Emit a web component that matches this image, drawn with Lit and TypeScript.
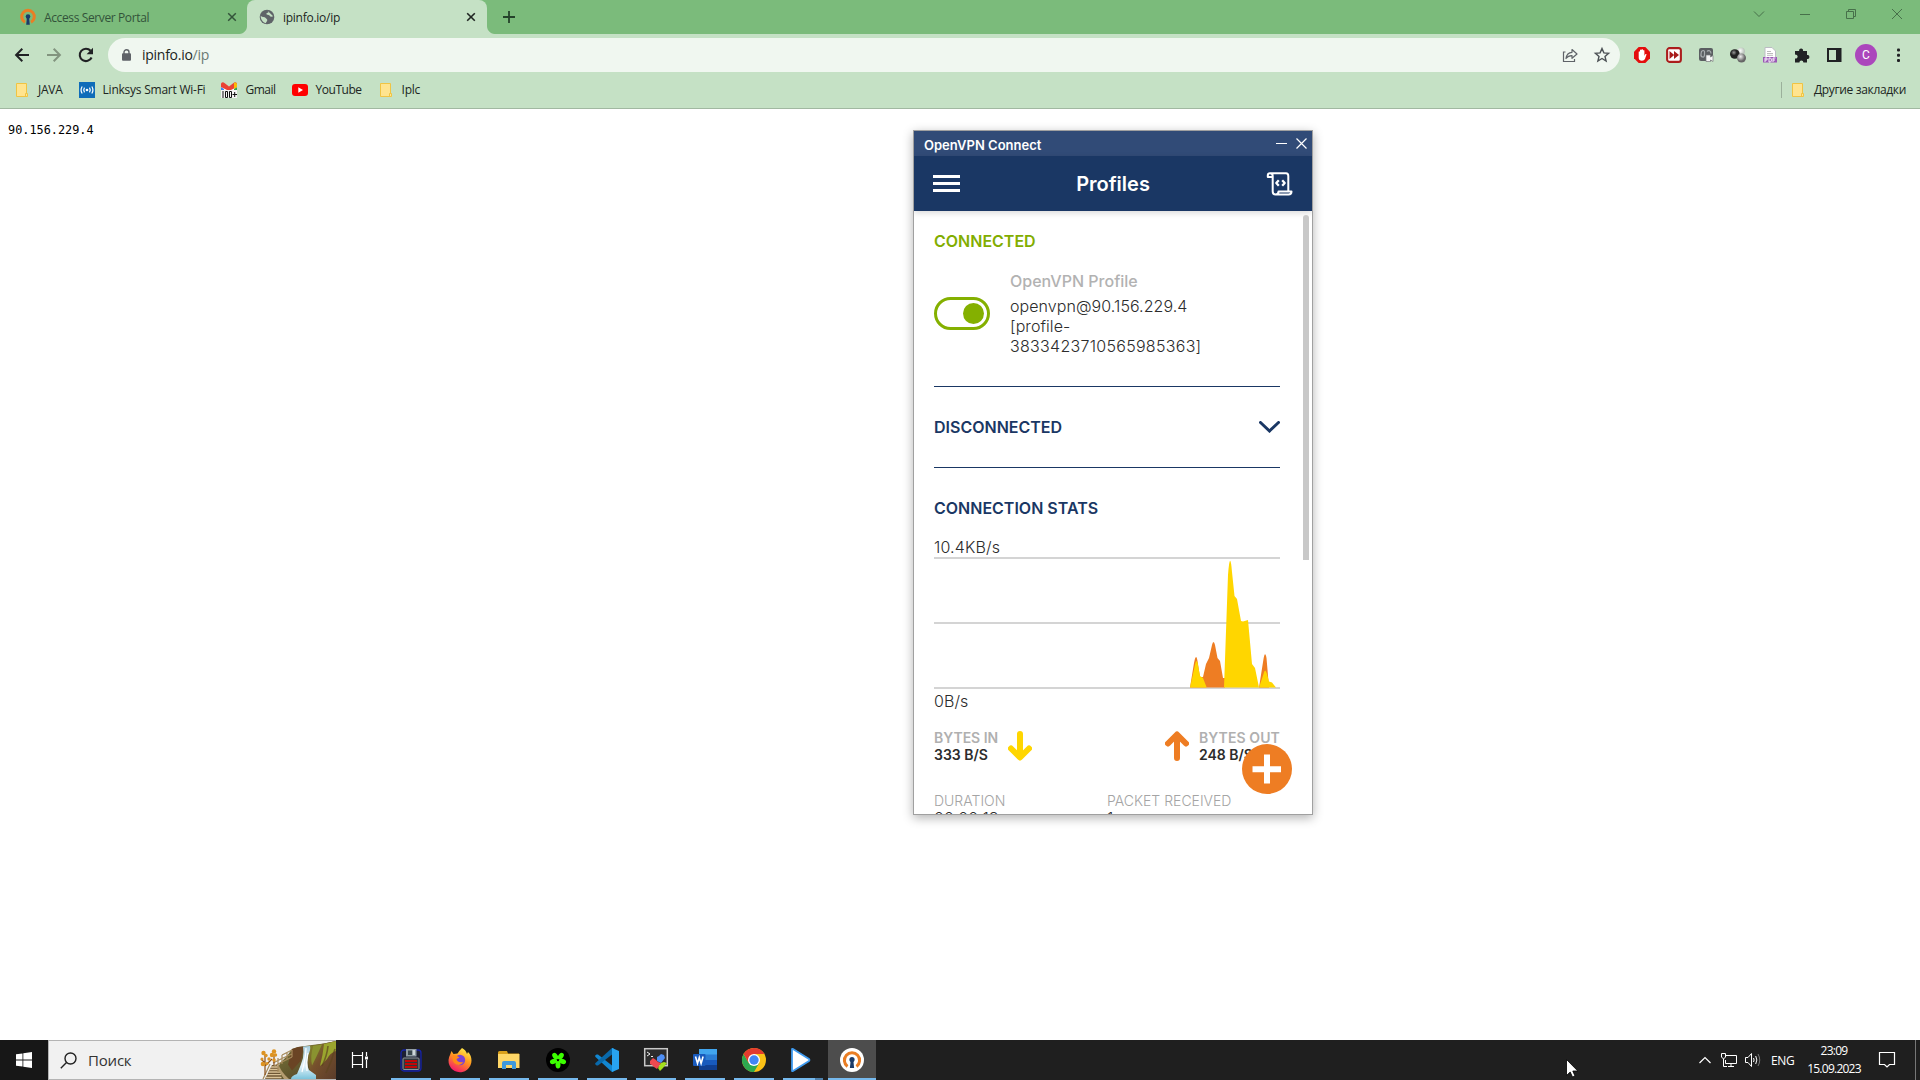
import { LitElement, html, css, svg } from "lit";
import { customElement } from "lit/decorators.js";

const folder = html`<svg class="i16" viewBox="0 0 16 16"><path d="M2.500 1.500h10v10h1v3h-11z" fill="#ffe48f" stroke="#f0c443"/><path d="M11.500 14.500v-3h1.500" fill="none" stroke="#f0c443"/></svg>`;

const vpnMark = (ring: string, key: string) => svg`
  <path d="M5 13.200A6.300 6.300 0 1 1 11 13.200" fill="none" stroke=${ring} stroke-width="3"/>
  <circle cx="8" cy="7.600" r="2.300" fill=${key}/><path d="M6.900 8.500h2.200l.7 7.300H6.200z" fill=${key}/>`;

@customElement("browser-chrome")
export class BrowserChrome extends LitElement {
  static styles = css`
    :host { display: flex; flex-direction: column; flex: none; height: 109px; box-sizing: border-box; background: #c5e1c5; border-bottom: 1px solid #a1b8a1; font-family: "Open Sans", sans-serif; font-size: 12px; color: #202522; white-space: nowrap; }
    svg { display: block; flex: none; overflow: visible; }
    .i16 { width: 16px; height: 16px; }
    .strip { display: flex; height: 34px; background: #7bbb7b; }
    .tab { display: flex; align-items: center; box-sizing: border-box; height: 34px; width: 240px; }
    .tab .label { flex: 1; margin-left: 8px; }
    .idle { width: 247px; padding: 0 7px 0 20px; color: #33533a; }
    .idle .label { letter-spacing: -0.38px; }
    .live { position: relative; padding: 0 8px 0 12px; background: #c5e1c5; border-radius: 8px 8px 0 0; }
    .live .label { letter-spacing: -0.26px; }
    .live::before, .live::after { content: ""; position: absolute; bottom: 0; width: 8px; height: 8px; }
    .live::before { left: -8px; background: radial-gradient(circle at 0 0, #7bbb7b 7.5px, #c5e1c5 8.5px); }
    .live::after { right: -8px; background: radial-gradient(circle at 100% 0, #7bbb7b 7.5px, #c5e1c5 8.5px); }
    .plus { margin: 10px 0 0 15px; width: 14px; height: 14px; }
    .win { display: flex; margin: 8px 17px 0 auto; gap: 34px; }
    .win svg { width: 12px; height: 12px; }
    .bar { display: flex; align-items: center; height: 42px; padding-left: 14px; box-sizing: border-box; }
    .nav { display: flex; gap: 16px; }
    .url { display: flex; align-items: center; box-sizing: border-box; width: 1512px; height: 34px; margin-left: 14px; padding: 0 10px 0 14px; border-radius: 17px; background: #f0f7f0; font-size: 14px; }
    .addr { flex: 1; margin: -1px 0 0 11px; letter-spacing: -0.27px; }
    .addr span { color: #6a7a74; }
    .urlicons { display: flex; gap: 16px; }
    .ext { display: flex; align-items: center; gap: 16px; margin-left: 14px; }
    .avatar { width: 22px; height: 22px; margin: 0 -3px; border-radius: 50%; background: #ab47bc; color: #fff; font: 12px/22px Roboto, sans-serif; text-align: center; }
    .marks { display: flex; align-items: center; height: 28px; padding: 0 14px; }
    .marks span { margin-top: -1px; }
    .mark { display: flex; align-items: center; gap: 8px; margin-right: 16px; letter-spacing: -0.24px; }
    .mark.wide { letter-spacing: -0.48px; }
    .other { display: flex; align-items: center; gap: 8px; margin-left: auto; letter-spacing: -0.34px; }
    .sep { width: 1px; height: 16px; background: #9bb09b; }
  `;
  render() {
    return html`
      <div class="strip">
        <div class="tab idle">
          <svg class="i16" viewBox="0 0 16 16">${vpnMark("#ea7e24", "#1b3b68")}</svg>
          <span class="label">Access Server Portal</span>
          <svg width="16" height="16" viewBox="0 0 16 16"><path d="M4.200 4.200l7.600 7.600M11.800 4.200l-7.600 7.600" stroke="#33533a" stroke-width="1.500"/></svg>
        </div>
        <div class="tab live">
          <svg class="i16" viewBox="0 0 16 16"><circle cx="8" cy="8" r="7.300" fill="#5f6368"/><path d="M8.500 1.700c1.800.6 1.500 1.600.3 2s-2 1-1 1.700 2.500.3 2.900 1.400 2 1.200 3.500.500M1.700 6.800c1.500 1.700 4 1 5 2.200S9 10.500 8 12s-1 2-1.300 2.300C4 13.500 1.500 10.500 1.700 6.800z" fill="#c5e1c5"/></svg>
          <span class="label">ipinfo.io/ip</span>
          <svg width="16" height="16" viewBox="0 0 16 16"><path d="M4.200 4.200l7.600 7.600M11.800 4.200l-7.600 7.600" stroke="#202522" stroke-width="1.600"/></svg>
        </div>
        <svg class="plus" viewBox="0 0 14 14"><path d="M7 1v12M1 7h12" stroke="#24422a" stroke-width="1.800"/></svg>
        <div class="win">
          <svg viewBox="0 0 12 12"><path d="M1 3.500l5 5 5-5" fill="none" stroke="#47704a"/></svg>
          <svg viewBox="0 0 12 12"><path d="M1 6.500h10" stroke="#47704a"/></svg>
          <svg viewBox="0 0 12 12"><path d="M1.500 3.500h7v7h-7zM3.500 3.500v-2h7v7h-2" fill="none" stroke="#47704a"/></svg>
          <svg viewBox="0 0 12 12"><path d="M1 1l10 10M11 1L1 11" stroke="#47704a"/></svg>
        </div>
      </div>
      <div class="bar">
        <div class="nav">
          <svg class="i16" viewBox="0 0 16 16"><path d="M15 8H2.500M8.300 1.800L2.100 8l6.200 6.200" fill="none" stroke="#202124" stroke-width="2"/></svg>
          <svg class="i16" viewBox="0 0 16 16"><path d="M1 8h12.500M7.700 1.800L13.900 8l-6.200 6.200" fill="none" stroke="#82947f" stroke-width="2"/></svg>
          <svg class="i16" viewBox="0 0 16 16"><path d="M13.600 10.500A6.200 6.200 0 1 1 12.600 3.800" fill="none" stroke="#202124" stroke-width="2.100"/><path d="M15 .8v6.400H8.600z" fill="#202124"/></svg>
        </div>
        <div class="url">
          <svg width="9" height="12" viewBox="0 0 9 12"><path d="M2 5V3.200a2.500 2.500 0 0 1 5 0V5" fill="none" stroke="#5f6368" stroke-width="1.400"/><rect y="4.300" width="9" height="7.500" rx="1" fill="#5f6368"/></svg>
          <div class="addr">ipinfo.io<span>/ip</span></div>
          <div class="urlicons">
            <svg class="i16" viewBox="0 0 16 16"><path d="M3.500 5H1.500v9.500h11V12" fill="none" stroke="#5f6368" stroke-width="1.200"/><path d="M4 11.500C4.500 8 6.500 5.500 10 5.300V2.500L15 7l-5 4.300V8.600C7.500 8.500 5.500 9.500 4 11.500z" fill="none" stroke="#5f6368" stroke-width="1.200" stroke-linejoin="round"/></svg>
            <svg class="i16" viewBox="0 0 16 16"><path d="M8 1.600l1.900 4.300 4.700.4-3.600 3.100 1.100 4.600L8 11.500 3.900 14 5 9.400 1.400 6.300l4.700-.4z" fill="none" stroke="#4c5155" stroke-width="1.400"/></svg>
          </div>
        </div>
        <div class="ext">
          <svg class="i16" viewBox="0 0 16 16"><path d="M4.700 0h6.600L16 4.700v6.600L11.300 16H4.700L0 11.300V4.700z" fill="#e40d0d"/><path d="M4.700 8.500V4.700q.7-.9 1.300 0V7V3q.8-.9 1.500 0v3.500V2.600q.8-.9 1.500 0v4V3.500q.8-.8 1.400 0V9l.8-1.700q.9-.8 1.400 0L11 12q-1 1.700-3 1.700-3.300 0-3.300-3z" fill="#fff"/></svg>
          <svg class="i16" viewBox="0 0 16 16"><rect x=".8" y=".8" width="14.400" height="14.400" rx="2.800" fill="#b32020" stroke="#a91b1b" stroke-width="1.400"/><rect x="2.200" y="2.200" width="11.600" height="11.600" rx="1" fill="#fff"/><path d="M3.500 4L8.200 8l-4.700 4zM8 4l5 4-5 4z" fill="#a91b1b"/></svg>
          <svg class="i16" viewBox="0 0 16 16"><rect x="1" y="1" width="14" height="13" rx="2" fill="#5a5e61"/><path d="M3.500 4.500q2-2 3 0v3q0 3-2 2.500T3 7zM9 4.500c1.500-2 4-.5 4 2" fill="none" stroke="#a7acae" stroke-width="1.200"/><path d="M8 8h4.500v2L15 8.500v6L12.500 13v1.500H8z" fill="#f5f5f5" stroke="#77797b" stroke-width=".7"/></svg>
          <svg class="i16" viewBox="0 0 16 16"><defs><radialGradient id="bk" cx=".4" cy=".35"><stop offset="0" stop-color="#999"/><stop offset=".6" stop-color="#222"/></radialGradient><radialGradient id="gr" cx=".4" cy=".35"><stop offset="0" stop-color="#eee"/><stop offset="1" stop-color="#666"/></radialGradient><radialGradient id="wh" cx=".4" cy=".4"><stop offset="0" stop-color="#fff"/><stop offset="1" stop-color="#bbc4bc"/></radialGradient></defs><circle cx="11" cy="4.500" r="4" fill="url(#wh)"/><circle cx="4.800" cy="7" r="4.800" fill="url(#bk)"/><circle cx="11.500" cy="11" r="4.500" fill="url(#gr)"/></svg>
          <svg class="i16" viewBox="0 0 16 16"><path d="M3 .5h7l3.500 3.500v10H3z" fill="#fff" stroke="#bcbcc4"/><path d="M5 4.500h4M5 6.500h6M5 8.300h6" stroke="#aaa" stroke-width=".8"/><rect x="1" y="10" width="14" height="5.500" fill="#9b59b6"/><path d="M3 15v-4h2v2H3M7 11h1.500l.8 1v2l-.8 1H7zM11 15v-4h2.500M11 13h2" fill="none" stroke="#fff" stroke-width=".9"/></svg>
          <svg class="i16" viewBox="0 0 16 16"><path d="M1 4h4.200a2 2 0 1 1 3.800 0H13v4a2 2 0 1 1 0 3.900V15.500H9.400a2 2 0 1 0-4 0H1v-4a2 2 0 1 0 0-3.800z" fill="#202124"/></svg>
          <svg class="i16" viewBox="0 0 16 16"><rect x="2" y="2" width="12.500" height="12" fill="none" stroke="#202124" stroke-width="2"/><path d="M10 1h5v14h-5z" fill="#202124"/></svg>
          <div class="avatar">C</div>
          <svg class="i16" viewBox="0 0 16 16"><g fill="#202124"><rect x="7" y="1.500" width="3" height="3" rx="1"/><rect x="7" y="6.700" width="3" height="3" rx="1"/><rect x="7" y="12" width="3" height="3" rx="1"/></g></svg>
        </div>
      </div>
      <div class="marks">
        <div class="mark">${folder}<span>JAVA</span></div>
        <div class="mark"><svg class="i16" viewBox="0 0 16 16"><rect width="16" height="16" fill="#0f6cb9"/><circle cx="8" cy="8" r="1.300" fill="#fff"/><path d="M5.500 5.700q-1.500 2.300 0 4.600M10.500 5.700q1.500 2.300 0 4.600M3.200 4.500q-2.300 3.500 0 7M12.800 4.500q2.300 3.500 0 7" fill="none" stroke="#fff" stroke-width="1.200"/></svg><span>Linksys Smart Wi-Fi</span></div>
        <div class="mark wide"><svg class="i16" viewBox="0 0 16 16"><path d="M0 1h3l5 4 5-4h3v15H0z" fill="#fff"/><path d="M0 5l3 2v4H0z" fill="#4285f4"/><path d="M16 5l-3 2v4h3z" fill="#34a853"/><path d="M0 1.500Q1.500-.5 3.500 1L8 4.500 12.500 1q2-1.500 3.500.5V5L8 9 0 5z" fill="#ea4335"/><path d="M13 .8q2-.8 3 1V5l-3 2z" fill="#fbbc04"/><rect y="8" width="16" height="8" fill="#f4f4f4"/><path d="M2 9v7M4.500 9.500h2v6h-2zM8.500 9.500h2v6h-2zM11.500 12.500h4.500M13.700 10v5" fill="none" stroke="#111"/></svg><span>Gmail</span></div>
        <div class="mark wide"><svg class="i16" viewBox="0 0 16 16"><rect y="2" width="16" height="12" rx="3" fill="#f00"/><path d="M6.300 5.300L11 8l-4.700 2.700z" fill="#fff"/></svg><span>YouTube</span></div>
        <div class="mark">${folder}<span>Iplc</span></div>
        <div class="other"><i class="sep"></i>${folder}<span>Другие закладки</span></div>
      </div>`;
  }
}

@customElement("vpn-window")
export class VpnWindow extends LitElement {
  static styles = css`
    :host { display: flex; flex-direction: column; box-sizing: border-box; width: 400px; height: 685px; border: 1px solid #a0a0a0; background: #fff; box-shadow: 0 3px 10px rgba(0,0,0,.3); font: 16px/20px Inter, sans-serif; color: #2c2c2c; overflow: hidden; white-space: nowrap; }
    svg { display: block; flex: none; }
    .title { display: flex; align-items: center; height: 25px; flex: none; padding: 0 4px 0 10px; background: #314b77; color: #fff; font-size: 13px; font-weight: 600; }
    .title .name { flex: 1; padding-top: 2px; }
    .head { display: flex; align-items: center; justify-content: space-between; flex: none; height: 55px; padding: 0 19px; background: #1a3764; color: #fff; font-size: 20px; font-weight: 600; box-shadow: 0 2px 6px rgba(0,0,0,.15); }
    .body { display: flex; flex: 1; min-height: 0; }
    .content { width: 346px; margin-left: 20px; display: flex; flex-direction: column; }
    .content > * { flex-shrink: 0; }
    .scroll { width: 6px; height: 345px; margin: 4px 3px 0 auto; border-radius: 3px 3px 0 0; background: #c8c8c8; }
    h2 { margin: 0; font-size: 16px; line-height: 20px; font-weight: 600; color: #1a3764; }
    h2.on { color: #82ad00; margin-top: 20px; }
    .profile { display: flex; align-items: center; height: 85px; margin: 20px 0 30px; gap: 20px; }
    .toggle { display: flex; justify-content: flex-end; align-items: center; box-sizing: border-box; width: 56px; height: 33px; border: 3px solid #84b000; border-radius: 17px; padding-right: 3px; }
    .toggle i { width: 21px; height: 21px; border-radius: 50%; background: #84b000; }
    .info { width: 200px; }
    .pname { font-weight: 500; color: #b2b2b2; margin-bottom: 5px; }
    .rule { height: 1px; background: #1a3764; }
    .row { display: flex; align-items: center; justify-content: space-between; height: 80px; }
    .stats { padding: 30px 0 19px; }
    .lbl { font-weight: 300; letter-spacing: 0.07px; }
    .digits { letter-spacing: 0.29px; }
    .max { letter-spacing: 0.15px; }
    .zero { margin-top: 2px; }
    .bytes { display: flex; justify-content: space-between; margin-top: 18px; font-size: 14px; line-height: 17px; font-weight: 600; }
    .bytes > div { display: flex; align-items: center; gap: 10px; }
    .out { width: 81px; }
    .gray { color: #b0b0b0; }
    .bytes .out .gray { letter-spacing: 0.1px; }
    .grid { display: grid; grid-template-columns: 173px 173px; margin-top: 29px; font-size: 14px; line-height: 18px; font-weight: 300; }
    .grid .gray { color: #a4a4a4; }
    .val { font-size: 16px; line-height: 16px; color: #2c2c2c; }
    .fab { position: absolute; left: 328px; top: 613px; width: 50px; height: 50px; border-radius: 50%; background: #ee7d23; }
    .fab svg { width: 50px; height: 50px; }
  `;
  render() {
    return html`
      <div class="title"><span class="name">OpenVPN Connect</span>
        <svg width="32" height="11" viewBox="0 0 32 11"><path d="M0 5.500h11M20.500.5l10 10M30.500.5l-10 10" stroke="#fff" stroke-width="1.200" fill="none"/></svg></div>
      <div class="head">
        <svg width="27" height="17" viewBox="0 0 27 17"><path d="M0 1.500h27M0 8.500h27M0 15.500h27" stroke="#fff" stroke-width="2.800"/></svg>
        <span>Profiles</span>
        <svg width="27" height="24" viewBox="0 0 27 24"><g fill="none" stroke="#fff" stroke-width="2" stroke-linejoin="round"><path d="M6.500 5H1.800V3.500Q1.800 1.300 4 1.300H20Q22.300 1.300 22.300 4V18.500M4 1.300Q6.700 1.300 6.700 4V19.500Q6.700 22.500 9.500 22.500H22.500Q25.500 22.500 25.500 19.500H12.500Q12.500 22.500 9.500 22.500"/><path d="M12.800 8.300L10.300 11l2.500 2.700M16.200 8.300l2.500 2.700-2.500 2.700" stroke-width="2.300"/></g></svg>
      </div>
      <div class="body">
        <div class="content">
          <h2 class="on">CONNECTED</h2>
          <div class="profile">
            <div class="toggle"><i></i></div>
            <div class="info"><div class="pname">OpenVPN Profile</div><div class="lbl">openvpn@90.156.229.4<br>[profile-<br><span class="digits">3833423710565985363]</span></div></div>
          </div>
          <div class="rule"></div>
          <div class="row"><h2>DISCONNECTED</h2><svg width="21" height="12" viewBox="0 0 21 12"><path d="M1.500 1.500l9 8.500 9-8.500" fill="none" stroke="#1a3764" stroke-width="3" stroke-linecap="round"/></svg></div>
          <div class="rule"></div>
          <div class="stats"><h2>CONNECTION STATS</h2></div>
          <div class="lbl max">10.4KB/s</div>
          <svg width="346" height="132" viewBox="934 557 346 132">
            <path d="M934 558h346M934 623h346M934 688h346" stroke="#d4d4d4" stroke-width="2"/>
            <path d="M1190 687.500L1194 663Q1196 652 1197.500 661L1200 677H1203L1206 664 1209 658 1212 645Q1213.500 639 1215 645L1217.500 658 1220 661 1223 678H1225V687.500H1259L1263.500 659Q1265 650 1266.500 658L1269 687.500z" fill="#ee7d23"/>
            <path d="M1190 687.500L1194.500 667Q1196.500 656 1198 665L1200 676 1203 678 1206.700 687.500zM1224 687.500L1228 575Q1230 548 1232 572L1234.500 596 1237 599 1241 621 1243 621.500 1248 620 1252 664 1255 668 1259 687.500 1263.500 674Q1265 667 1267 674L1269 681.500 1272 682.500 1276 687.500z" fill="#ffd600"/>
          </svg>
          <div class="lbl zero">0B/s</div>
          <div class="bytes">
            <div><div><span class="gray">BYTES IN</span><br>333 B/S</div>
              <svg width="24" height="30" viewBox="0 0 24 30"><path d="M12 3v23M3 17.500l9 9 9-9" fill="none" stroke="#ffd600" stroke-width="6" stroke-linecap="round" stroke-linejoin="round"/></svg></div>
            <div><svg width="24" height="30" viewBox="0 0 24 30"><path d="M12 27V4M3 12.500l9-9 9 9" fill="none" stroke="#ee7d23" stroke-width="6" stroke-linecap="round" stroke-linejoin="round"/></svg>
              <div class="out"><span class="gray">BYTES OUT</span><br>248 B/S</div></div>
          </div>
          <div class="grid"><span class="gray">DURATION</span><span class="gray">PACKET RECEIVED</span><span class="val">00:00:18</span><span class="val">1 sec ago</span></div>
        </div>
        <div class="scroll"></div>
      </div>
      <div class="fab"><svg viewBox="0 0 50 50"><path d="M25 10.500v29M10.500 25.200h28.500" stroke="#fff" stroke-width="6"/></svg></div>`;
  }
}

@customElement("task-bar")
export class TaskBar extends LitElement {
  static styles = css`
    :host { display: flex; flex: none; height: 40px; background: #1f1f1f; font-family: "Open Sans", sans-serif; font-size: 12px; color: #fff; white-space: nowrap; }
    svg { display: block; flex: none; overflow: visible; }
    .start { display: flex; align-items: center; justify-content: center; width: 48px; background: #171717; }
    .search { display: flex; align-items: center; box-sizing: border-box; width: 288px; border: 1px solid #b4b4b4; border-right: 0; background: #f1f1f1; color: #333; font-size: 15px; padding-left: 11px; }
    .search .q { flex: 1; margin-left: 11px; letter-spacing: -0.2px; }
    .search .scene { overflow: hidden; }
    .task { display: flex; align-items: center; justify-content: center; width: 48px; }
    .apps { display: flex; gap: 9px; padding-left: 7px; }
    .app { display: flex; align-items: center; justify-content: center; width: 40px; box-sizing: border-box; border-bottom: 2px solid #76b9ed; padding-top: 1px; }
    .multi { border-image: linear-gradient(90deg, #76b9ed 31px, #4d80ab 31px) 2; border-width: 0 0 2px; border-style: solid; }
    .cur { width: 48px; margin-left: -4px; background: #4d4d4d; }
    .app svg { width: 24px; height: 24px; }
    .tray { display: flex; align-items: center; margin-left: auto; }
    .net { margin-left: 10px; }
    .vol { margin-left: 8px; }
    .lang { margin-left: 10px; width: 24px; letter-spacing: -0.4px; }
    .clock { width: 60px; margin-left: 9px; text-align: center; line-height: 18px; letter-spacing: -0.75px; }
    .note { margin-left: 15px; }
    .desk { width: 4px; height: 40px; margin-left: 20px; border-left: 1px solid #777; }
  `;
  render() {
    const apps = [
      svg`<rect x="2" y="2" width="20" height="21" rx="3" fill="#1d2033" stroke="#1522a8" stroke-width="1.300"/><path d="M7 1h10.500v7.500H7z" fill="#8f9ba2"/><path d="M9 2.500h4.500v4.500H9z" fill="#39464c"/><path d="M13.500 2h2.500v5h-2.500z" fill="#cdd5d9"/><rect x="4" y="10" width="16" height="11.500" rx="1" fill="#30373c" stroke="#8d9499"/><path d="M6 13h12M6 16h12M6 19h12" stroke="#c40606" stroke-width="2.200"/>`,
      svg`<defs><linearGradient id="ff" x1=".8" y1="0" x2=".3" y2="1"><stop offset="0" stop-color="#fff44f"/><stop offset=".45" stop-color="#ff9a1f"/><stop offset="1" stop-color="#f5156c"/></linearGradient></defs><path d="M14 0Q18 2 19 6l1-2q3.500 3.500 3.500 8.500A11.500 11.500 0 1 1 2 7l1.500-4 2 3 4-.5Q10.500 3.500 14 0z" fill="url(#ff)"/><circle cx="12" cy="12" r="5.200" fill="#7a42d4"/><path d="M5 7q4 0 6.500 2.500L8.500 11q1 4 7 3-2.500 4-7 2.500Q3 14 5 7z" fill="#ff8a16"/>`,
      svg`<path d="M1 4.500Q1 3 2.500 3H10l1 2.500h11V20H1z" fill="#dba11c"/><path d="M1 6h21.500v14H1z" fill="#ffd767"/><path d="M5 21v-6q0-2 2-2h10q2 0 2 2v6h-4v-4H9v4z" fill="#3f99dc"/>`,
      svg`<circle cx="12" cy="12" r="12" fill="#000"/>${[36, 108, 180, 252, 324].map(a => svg`<ellipse cx="12" cy="7.300" rx="2.500" ry="3.700" fill="#3cff00" transform="rotate(${a} 12 12)"/>`)}`,
      svg`<path d="M17 0l2 .8V23l-2 1L.5 9 0 7.800 1.500 6.500 3 6.500 17 17.500z" fill="#1286d0"/><path d="M17 0v6.500L3 17.500l-1.500 0L0 16l.5-1z" fill="#0969ab"/><path d="M17 0l7 3v18l-7 3z" fill="#28a3f0"/>`,
      svg`<rect x=".7" y=".7" width="22.600" height="17" fill="#2c2c2c" stroke="#c8c8c8" stroke-width="1.500"/><path d="M3 4l3 2-3 2M7 8.500h2" fill="none" stroke="#eee"/><path d="M13 9l2-1 2-2 3 1 1 3-4 5-4-2z" fill="#4f8ff5"/><path d="M6 13l3-3 3 2 2 2 3 1-4 6-3-2-2-2-2-1z" fill="#f04a50"/><path d="M14 20l3-5 3-1 3 1-4 5-3 3z" fill="#a4e01c"/>`,
      svg`<rect x="6" y="1" width="18" height="21" rx="1" fill="#2b7cd3"/><path d="M6 1h18v5.500H6z" fill="#41a5ee"/><path d="M6 12h18v5H6z" fill="#185abd"/><path d="M6 17h18v5H6z" fill="#103f91"/><rect y="6" width="12.500" height="12" rx="1" fill="#185abd"/><path d="M2.500 8.500l2 7 1.800-6 1.800 6 2-7" fill="none" stroke="#fff" stroke-width="1.600"/>`,
      svg`<circle cx="12" cy="12" r="12" fill="#fbc116"/><path d="M1.600 6A12 12 0 0 0 12 24l5.200-9L12 12 6.800 15z" fill="#2da94f"/><path d="M12 6h10.400A12 12 0 0 0 1.600 6l5.200 9z" fill="#e33b2e"/><circle cx="12" cy="12" r="6" fill="#fff"/><circle cx="12" cy="12" r="4.700" fill="#4285f4"/>`,
      svg`<path d="M1 1.500q0-1 1-.5l16 10q1 1 0 2L2 23q-1 .5-1-.5z" fill="#fff" stroke="#3f9bf0" stroke-width="1.800"/>`,
      svg`<circle cx="12" cy="12" r="12" fill="#fff"/><path d="M7.500 18.500A7.600 7.600 0 1 1 16.500 18.500" fill="none" stroke="#ea7e24" stroke-width="3"/><circle cx="12" cy="11.500" r="2.600" fill="#1b3b68"/><path d="M10.700 12h2.600l.8 8h-4.200z" fill="#1b3b68"/>`,
    ];
    return html`
      <div class="start"><svg width="16" height="16" viewBox="0 0 16 16"><path d="M0 2.300L6.500 1.400v6.200H0zM7.300 1.200L16 0v7.600H7.300zM0 8.400h6.500v6.200L0 13.700zM7.300 8.400H16V16l-8.700-1.200z" fill="#fff"/></svg></div>
      <div class="search">
        <svg width="17" height="17" viewBox="0 0 17 17"><circle cx="10.500" cy="6.500" r="5.500" fill="none" stroke="#222" stroke-width="1.400"/><path d="M6.500 10.500L.8 16.200" stroke="#222" stroke-width="1.400"/></svg>
        <span class="q">Поиск</span>
        <svg class="scene" width="76" height="38" viewBox="0 0 76 38">
          <defs>
            <linearGradient id="hill" x1="0" y1="0" x2="1" y2="1"><stop offset="0" stop-color="#84912c"/><stop offset=".45" stop-color="#76502c"/><stop offset="1" stop-color="#5a3c2a"/></linearGradient>
            <linearGradient id="bank" x1="0" y1="0" x2="1" y2="1"><stop offset="0" stop-color="#7c7a3a"/><stop offset="1" stop-color="#4c3a24"/></linearGradient>
            <linearGradient id="fall" x1="0" y1="0" x2="0" y2="1"><stop offset="0" stop-color="#a9cfdf"/><stop offset=".6" stop-color="#e6f4fa"/><stop offset="1" stop-color="#7cc4dc"/></linearGradient>
          </defs>
          <path d="M14 38L20 22 27 15 32 8 38 6 52 4 64 2.500 76 0V38z" fill="url(#bank)"/>
          <path d="M32 8l6-2 6-.5-3 14-9 10-4-6z" fill="#6a4424"/>
          <path d="M50 5l14-2.500L76 0v38H56l-6-8-2-10z" fill="url(#hill)"/>
          <path d="M53 5l9-1.500-6 13-4 8q-2-9 1-19z" fill="#8a9330"/>
          <path d="M64 3q5-1 12-3v10q-6 2-9 8-4 5-7 7 3-12 4-22z" fill="#9aa52e"/>
          <path d="M68 5q-1 10-6 20M75 8q-3 12-9 24" fill="none" stroke="#5c4420" stroke-width="1.600" opacity=".7"/>
          <path d="M43 5.500l7-.5q1 4-2 9-2 9 1 15l7 5v4H31q0-3 6-5 4-9 6-16 1-6 0-11.500z" fill="url(#fall)"/>
          <path d="M46 7q0 9-4 24M48 12q-2 9-1 18" stroke="#fff" stroke-width="1.200" fill="none"/>
          <path d="M5 38l7-14h5l4 14z" fill="#6e5635"/>
          <path d="M5.500 36.500h16M7 33.700h14M8.300 31h12M9.500 28.500h9M11 26h7" stroke="#d9c196" stroke-width="1.300"/>
          <path d="M18 22q2 8 11 16h-5l-6-9z" fill="#b49c70"/>
          <path d="M10 23L3 38M13 22l10-5 9-4M14 25l10-5 8-4M18 17v14M22 14v9M27 11v8M32 9v7M22 14l10-5" stroke="#a4895a" stroke-width="1.200" fill="none"/>
          <path d="M5 34V14M5 25l7-7M5 22l-4-4M14 24V14" stroke="#8b4f18" stroke-width="1.200" fill="none"/>
          <g fill="#dd9322"><circle cx="3.500" cy="12" r="2.200"/><circle cx="6" cy="14.500" r="1.700"/><circle cx="14" cy="10.500" r="2.200"/><circle cx="12" cy="14" r="2.200"/><circle cx="15.500" cy="14" r="1.700"/><circle cx="9" cy="18" r="1.700"/><circle cx="2" cy="18" r="1.500"/><circle cx="3" cy="23" r="2.300"/><circle cx="7" cy="22.500" r="1.600"/><circle cx="14" cy="19" r="1.800"/></g>
        </svg>
      </div>
      <div class="task"><svg width="16" height="16" viewBox="0 0 16 16"><path d="M.5 0v3.500h10V0M.5 16v-3.500h10V16M.5 3.500v9M10.500 3.500v9M14.500 0v4M14.500 8v8" fill="none" stroke="#fff" stroke-width="1.200"/><path d="M13 4.500h3v3h-3z" fill="#fff"/></svg></div>
      <div class="apps">${apps.map((a, i) => html`<div class="app ${i === 8 ? "multi" : i === 9 ? "cur" : ""}"><svg viewBox="0 0 24 24">${a}</svg></div>`)}</div>
      <div class="tray">
        <svg width="12" height="8" viewBox="0 0 12 8"><path d="M.5 7L6 1.500 11.500 7" fill="none" stroke="#fff" stroke-width="1.200"/></svg>
        <svg class="net" width="16" height="14" viewBox="0 0 16 14"><path d="M5 2.500h10.500v8H4.500V7M7 13.500h6M10 10.500v3M2.500 6v7.500H6M.5.5h4v3.500L2.500 6 .5 4z" fill="none" stroke="#fff"/></svg>
        <svg class="vol" width="16" height="14" viewBox="0 0 16 14"><path d="M.5 4.500H3l3.500-4v13L3 9.500H.5zM8.500 5q1.200 2 0 4M10.700 3q2.300 4 0 8" fill="none" stroke="#fff"/><path d="M13 1q3.500 6 0 12" fill="none" stroke="#777"/></svg>
        <span class="lang">ENG</span>
        <div class="clock">23:09<br>15.09.2023</div>
        <svg class="note" width="16" height="16" viewBox="0 0 16 16"><path d="M.5.5h15v12h-5L8 15l-2.500-2.500h-5z" fill="none" stroke="#fff" stroke-width="1.200"/></svg>
        <div class="desk"></div>
      </div>`;
  }
}

@customElement("app-root")
export class AppRoot extends LitElement {
  static styles = css`
    :host { display: flex; flex-direction: column; position: relative; width: 1920px; height: 1080px; overflow: hidden; background: #fff; }
    .page { flex: 1; padding: 13px 8px; font: 11.85px/16px "DejaVu Sans Mono", monospace; color: #000; }
    vpn-window { position: absolute; left: 913px; top: 130px; }
    .cursor { position: absolute; left: 1566px; top: 1059px; }
  `;
  render() {
    return html`<browser-chrome></browser-chrome>
      <div class="page">90.156.229.4</div>
      <vpn-window></vpn-window>
      <task-bar></task-bar>
      <svg class="cursor" width="12" height="19" viewBox="0 0 12 19"><path d="M.5.5v16l3.700-3.500 2.300 5 2.500-1-2.200-5h5z" fill="#fff" stroke="#000" stroke-width=".8"/></svg>`;
  }
}
